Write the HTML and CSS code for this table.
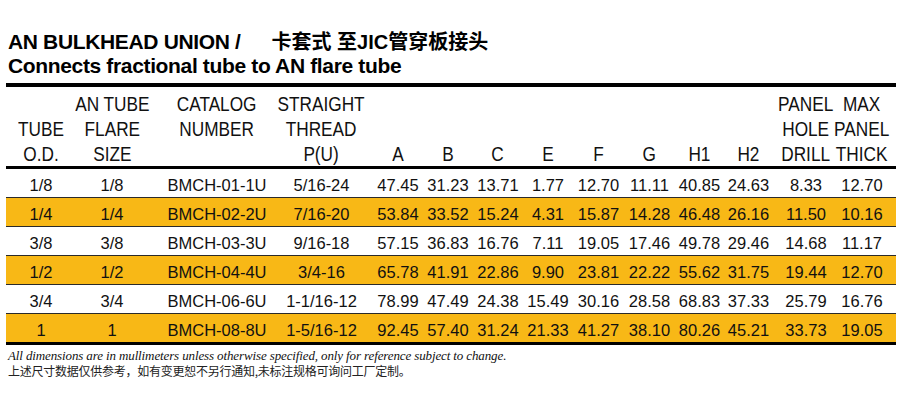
FILE: index.html
```html
<!DOCTYPE html>
<html lang="zh-CN">
<head>
    <meta charset="UTF-8">
    <meta name="viewport" content="width=device-width, initial-scale=1.0">
    <title>AN Bulkhead Union</title>
    <link rel="stylesheet" href="styles.css">
</head>
<body>
    <div class="titulo">
        <div class="linha">AN BULKHEAD UNION /<span class="cn">卡套式 至JIC管穿板接头</span></div>
        <div class="linha">Connects fractional tube to AN flare tube</div>
    </div>

    <div class="folha">
        <table class="tabela">
            <colgroup>
                <col class="c-od">
                <col class="c-flare">
                <col class="c-cat">
                <col class="c-thread">
                <col class="c-dim"><col class="c-dim"><col class="c-dim"><col class="c-dim">
                <col class="c-dim2"><col class="c-dim2">
                <col class="c-dim3"><col class="c-dim3">
                <col class="c-drill">
                <col class="c-thick">
            </colgroup>
            <thead>
                <tr>
                    <th><span class="cab">TUBE<br>O.D.</span></th>
                    <th><span class="cab">AN TUBE<br>FLARE<br>SIZE</span></th>
                    <th class="cat"><span class="cab">CATALOG<br>NUMBER<br>&nbsp;</span></th>
                    <th><span class="cab">STRAIGHT<br>THREAD<br>P(U)</span></th>
                    <th><span class="cab">A</span></th>
                    <th><span class="cab">B</span></th>
                    <th><span class="cab">C</span></th>
                    <th><span class="cab">E</span></th>
                    <th><span class="cab">F</span></th>
                    <th><span class="cab">G</span></th>
                    <th><span class="cab">H1</span></th>
                    <th><span class="cab">H2</span></th>
                    <th><span class="cab">PANEL<br>HOLE<br>DRILL</span></th>
                    <th class="ult"><span class="cab">MAX<br>PANEL<br>THICK</span></th>
                </tr>
            </thead>
            <tbody>
                <tr>
                    <td>1/8</td><td>1/8</td><td class="cat">BMCH-01-1U</td><td>5/16-24</td>
                    <td>47.45</td><td>31.23</td><td>13.71</td><td>1.77</td><td>12.70</td>
                    <td>11.11</td><td>40.85</td><td>24.63</td><td>8.33</td><td class="ult">12.70</td>
                </tr>
                <tr class="amarela">
                    <td>1/4</td><td>1/4</td><td class="cat">BMCH-02-2U</td><td>7/16-20</td>
                    <td>53.84</td><td>33.52</td><td>15.24</td><td>4.31</td><td>15.87</td>
                    <td>14.28</td><td>46.48</td><td>26.16</td><td>11.50</td><td class="ult">10.16</td>
                </tr>
                <tr>
                    <td>3/8</td><td>3/8</td><td class="cat">BMCH-03-3U</td><td>9/16-18</td>
                    <td>57.15</td><td>36.83</td><td>16.76</td><td>7.11</td><td>19.05</td>
                    <td>17.46</td><td>49.78</td><td>29.46</td><td>14.68</td><td class="ult">11.17</td>
                </tr>
                <tr class="amarela">
                    <td>1/2</td><td>1/2</td><td class="cat">BMCH-04-4U</td><td>3/4-16</td>
                    <td>65.78</td><td>41.91</td><td>22.86</td><td>9.90</td><td>23.81</td>
                    <td>22.22</td><td>55.62</td><td>31.75</td><td>19.44</td><td class="ult">12.70</td>
                </tr>
                <tr>
                    <td>3/4</td><td>3/4</td><td class="cat">BMCH-06-6U</td><td>1-1/16-12</td>
                    <td>78.99</td><td>47.49</td><td>24.38</td><td>15.49</td><td>30.16</td>
                    <td>28.58</td><td>68.83</td><td>37.33</td><td>25.79</td><td class="ult">16.76</td>
                </tr>
                <tr class="amarela">
                    <td>1</td><td>1</td><td class="cat">BMCH-08-8U</td><td>1-5/16-12</td>
                    <td>92.45</td><td>57.40</td><td>31.24</td><td>21.33</td><td>41.27</td>
                    <td>38.10</td><td>80.26</td><td>45.21</td><td>33.73</td><td class="ult">19.05</td>
                </tr>
            </tbody>
        </table>
    </div>

    <div class="nota">
        <p class="en">All dimensions are in mullimeters unless otherwise specified, only for reference subject to change.</p>
        <p class="zh">上述尺寸数据仅供参考，如有变更恕不另行通知,未标注规格可询问工厂定制。</p>
    </div>
</body>
</html>
```

FILE: styles.css
```css
*{
    margin: 0;
    padding: 0;
    box-sizing: border-box;
}
body{
    background-color: #fff;
    color: #111;
    font-family: "Liberation Sans", Arial, sans-serif;
    width: 900px;
    height: 414px;
    overflow: hidden;
}

/* titulo em cima */
.titulo{
    padding: 30px 0 0 8px;
    font-weight: bold;
    font-size: 21px;
    line-height: 24px;
    letter-spacing: -0.35px;
    color: #000;
}
.linha{
    height: 24px;
    white-space: nowrap;
}
.cn{
    margin-left: 31px;
    font-family: "Liberation Sans", "Noto Sans CJK SC", sans-serif;
    font-size: 20px;
    letter-spacing: 0;
}

/* a tabela com as linhas pretas */
.folha{
    margin: 5px 4px 0 6px;
    border-top: 4px solid #000;
    border-bottom: 3px solid #000;
}
.tabela{
    width: 890px;
    table-layout: fixed;
    border-collapse: separate;
    border-spacing: 0;
}
.c-od{ width: 70px; }
.c-flare{ width: 72px; }
.c-cat{ width: 122px; }
.c-thread{ width: 103px; }
.c-dim{ width: 50px; }
.c-dim2{ width: 51px; }
.c-dim3{ width: 49px; }
.c-drill{ width: 66px; }
.c-thick{ width: 57px; }

.tabela th{
    font-weight: normal;
    font-size: 21px;
    line-height: 25px;
    padding-top: 4px;
    vertical-align: bottom;
    text-align: center;
    white-space: nowrap;
    border-bottom: 3px solid #000;
}
/* fonte estreita: nao tem a Narrow instalada, entao aperto na mao */
.cab{
    display: inline-block;
    margin: 0 -30px;
    transform: scaleX(0.82);
    transform-origin: center bottom;
}
.tabela td{
    font-size: 16.5px;
    line-height: 24px;
    padding-top: 4px;
    text-align: center;
    white-space: nowrap;
    border-bottom: 1px solid #2a2a2a;
}
.tabela tbody tr:last-child td{
    border-bottom: none;
}
.tabela .cat{
    padding-left: 16px;
}
.tabela .ult{
    padding-right: 11px;
}
.amarela td{
    background-color: #f8b816;
}

/* rodape */
.nota{
    padding: 3px 0 0 8px;
    white-space: nowrap;
}
.en{
    font-family: "Liberation Serif", "Times New Roman", serif;
    font-style: italic;
    font-size: 13px;
    line-height: 16px;
    letter-spacing: -0.12px;
}
.zh{
    font-family: "Noto Sans CJK SC", sans-serif;
    font-size: 12px;
    line-height: 14px;
    letter-spacing: -0.25px;
    color: #222;
}
```
